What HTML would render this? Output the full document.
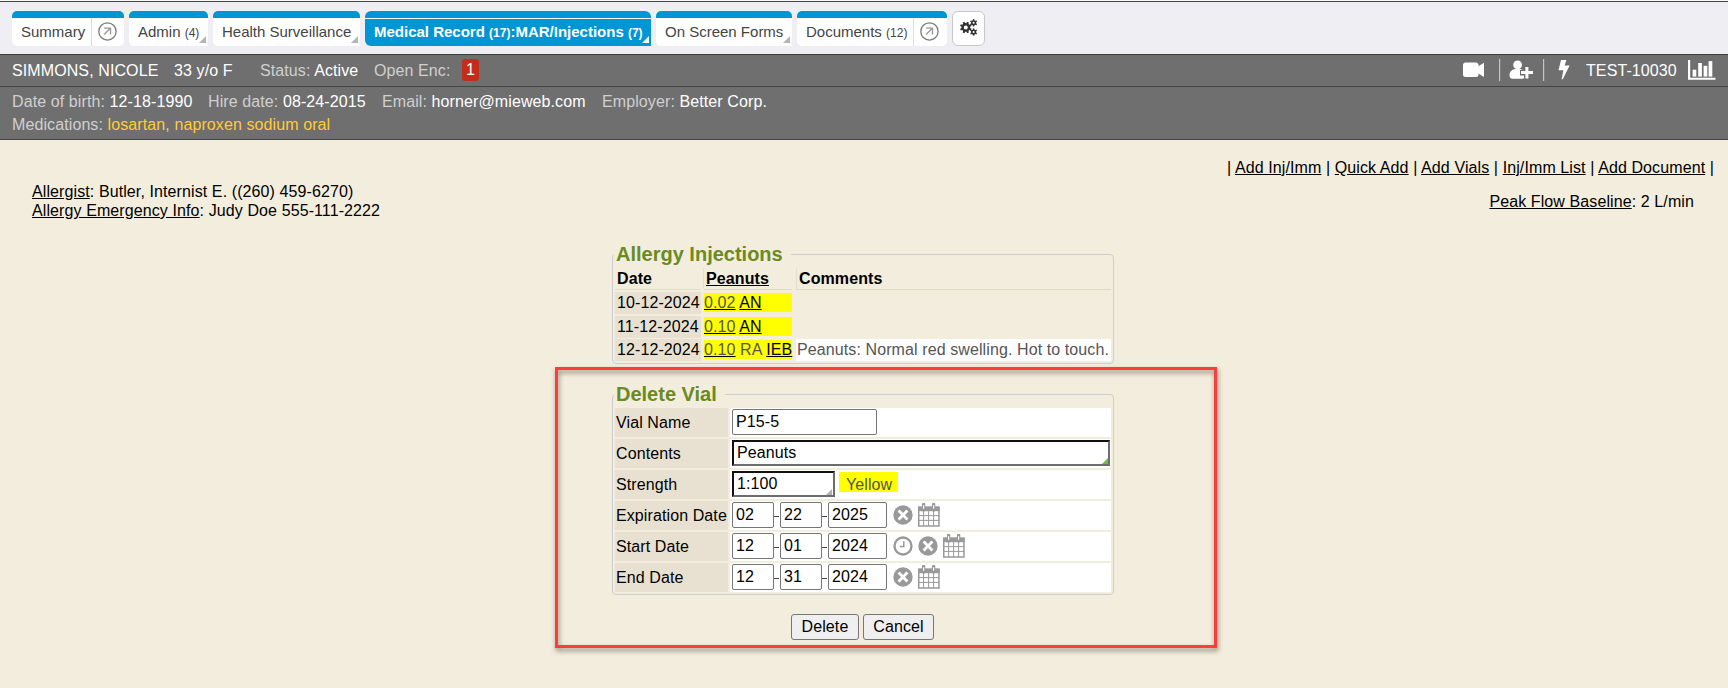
<!DOCTYPE html>
<html><head><meta charset="utf-8">
<style>
*{box-sizing:border-box}
html,body{margin:0;padding:0}
body{width:1728px;height:688px;overflow:hidden;background:#f3eddd;font-family:"Liberation Sans",sans-serif;color:#000;position:relative;letter-spacing:0.1px}
.legend,.tab{letter-spacing:0}
.abs{position:absolute}
#topbar{left:0;top:0;width:1728px;height:54px;background:#efeef3;border-top:1px solid #f8f8fb}
#topline{left:0;top:1px;width:1728px;height:1px;background:#454545}
.tab{position:absolute;top:11px;height:35px;background:#fff;border-top:7px solid #0096d6;border-radius:5px;font-size:15px;color:#444;white-space:nowrap}
.tab .t{position:absolute;top:5px;line-height:17px}
.tab small{font-size:12px}
.grip{position:absolute;right:2px;bottom:3px;width:0;height:0;border-left:7px solid transparent;border-bottom:7px solid #b5b5b5}
.sep{position:absolute;top:0;bottom:0;width:1px;background:#ddd}
.ext{position:absolute;width:19px;height:19px;border:1.3px solid #777;border-radius:50%}
#hdr1{left:0;top:54px;width:1728px;height:33px;background:#6f6f6f;border-top:1px solid #3c3c3c;border-bottom:1px solid #444;font-size:16px;color:#fff;white-space:nowrap}
#hdr2{left:0;top:87px;width:1728px;height:53px;background:#6f6f6f;border-bottom:1px solid #444;font-size:16px;color:#fff;white-space:nowrap}
.lbl{color:#d0d0d0}
.yel{color:#ffcc33}
.u{text-decoration:underline}
.txt16{font-size:16px;white-space:nowrap}
fieldset.fs{position:absolute;border:1px solid #cacdd1;border-radius:4px;margin:0;padding:0}
.legend{position:absolute;font-size:20px;font-weight:bold;color:#6a8a22;background:#f3eddd;white-space:nowrap;line-height:22px}
.cell{position:absolute;font-size:16px;white-space:nowrap;line-height:18px}
.dk{background:#e8e1d2}
.wh{background:#fff}
.yl{background:#ffff00}
.gr{color:#555}
.u.gr{text-decoration-color:#000}
.inp{position:absolute;background:#fff;border:1px solid #767676;border-radius:2px;font-size:16px;line-height:18px;padding:3px 0 0 3px;white-space:nowrap}
.inset{border-width:2px;border-style:solid;border-color:#111 #6d6d6d #6d6d6d #111;border-radius:0}
.btn{position:absolute;top:614px;height:26px;background:#efefef;border:1px solid #767676;border-radius:3px;font-size:16px;line-height:18px;text-align:center;padding-top:3px}
</style></head><body>

<div id="topbar" class="abs"></div><div id="topline" class="abs"></div>

<!-- tabs -->
<div class="tab" style="left:12px;width:112px"><span class="t" style="left:9px">Summary</span><div class="sep" style="left:79px"></div><svg class="abs" style="left:84px;top:2px" width="22" height="22" viewBox="0 0 22 22"><circle cx="11.45" cy="11.45" r="8.65" fill="none" stroke="#7a7a7a" stroke-width="1.3"/><path d="M8 8.1H14.5V14.6M14.5 8.1L8.1 14.6" fill="none" stroke="#9a9a9a" stroke-width="1.4"/></svg></div>
<div class="tab" style="left:129px;width:79px;border-bottom-right-radius:0"><span class="t" style="left:9px">Admin <small>(4)</small></span><div class="grip"></div></div>
<div class="tab" style="left:213px;width:147px;border-bottom-right-radius:0"><span class="t" style="left:9px">Health Surveillance</span><div class="grip"></div></div>
<div class="tab" style="left:365px;width:286px;background:#0096d6;color:#fff;font-weight:bold;border-radius:6px 6px 0 6px"><div style="position:absolute;left:0;right:0;top:0;height:1px;background:#fff"></div><span class="t" style="left:9px">Medical Record <small>(17)</small>:MAR/Injections <small>(7)</small></span><div class="grip" style="border-bottom-color:#fff"></div></div>
<div class="tab" style="left:656px;width:136px;border-bottom-right-radius:0"><span class="t" style="left:9px">On Screen Forms</span><div class="grip"></div></div>
<div class="tab" style="left:797px;width:150px"><span class="t" style="left:9px">Documents <small>(12)</small></span><div class="sep" style="left:116px"></div><svg class="abs" style="left:121px;top:2px" width="22" height="22" viewBox="0 0 22 22"><circle cx="11.45" cy="11.45" r="8.65" fill="none" stroke="#7a7a7a" stroke-width="1.3"/><path d="M8 8.1H14.5V14.6M14.5 8.1L8.1 14.6" fill="none" stroke="#9a9a9a" stroke-width="1.4"/></svg></div>
<div class="abs" style="left:952px;top:11px;width:33px;height:35px;background:#fff;border:1px solid #c8c8c8;border-radius:6px"></div>
<svg class="abs" style="left:952px;top:11px" width="33" height="35" viewBox="952 11 33 35"><circle cx="965.8" cy="27.4" r="3.20" fill="none" stroke="#333" stroke-width="2.40"/><rect x="964.80" y="21.60" width="2.0" height="2.20" fill="#333" transform="rotate(22.5 965.8 27.4)"/><rect x="964.80" y="21.60" width="2.0" height="2.20" fill="#333" transform="rotate(67.5 965.8 27.4)"/><rect x="964.80" y="21.60" width="2.0" height="2.20" fill="#333" transform="rotate(112.5 965.8 27.4)"/><rect x="964.80" y="21.60" width="2.0" height="2.20" fill="#333" transform="rotate(157.5 965.8 27.4)"/><rect x="964.80" y="21.60" width="2.0" height="2.20" fill="#333" transform="rotate(202.5 965.8 27.4)"/><rect x="964.80" y="21.60" width="2.0" height="2.20" fill="#333" transform="rotate(247.5 965.8 27.4)"/><rect x="964.80" y="21.60" width="2.0" height="2.20" fill="#333" transform="rotate(292.5 965.8 27.4)"/><rect x="964.80" y="21.60" width="2.0" height="2.20" fill="#333" transform="rotate(337.5 965.8 27.4)"/><circle cx="973.6" cy="22.8" r="1.80" fill="none" stroke="#333" stroke-width="1.60"/><rect x="972.85" y="19.20" width="1.5" height="1.80" fill="#333" transform="rotate(0.0 973.6 22.8)"/><rect x="972.85" y="19.20" width="1.5" height="1.80" fill="#333" transform="rotate(60.0 973.6 22.8)"/><rect x="972.85" y="19.20" width="1.5" height="1.80" fill="#333" transform="rotate(120.0 973.6 22.8)"/><rect x="972.85" y="19.20" width="1.5" height="1.80" fill="#333" transform="rotate(180.0 973.6 22.8)"/><rect x="972.85" y="19.20" width="1.5" height="1.80" fill="#333" transform="rotate(240.0 973.6 22.8)"/><rect x="972.85" y="19.20" width="1.5" height="1.80" fill="#333" transform="rotate(300.0 973.6 22.8)"/><circle cx="973.6" cy="32.0" r="1.80" fill="none" stroke="#333" stroke-width="1.60"/><rect x="972.85" y="28.40" width="1.5" height="1.80" fill="#333" transform="rotate(0.0 973.6 32.0)"/><rect x="972.85" y="28.40" width="1.5" height="1.80" fill="#333" transform="rotate(60.0 973.6 32.0)"/><rect x="972.85" y="28.40" width="1.5" height="1.80" fill="#333" transform="rotate(120.0 973.6 32.0)"/><rect x="972.85" y="28.40" width="1.5" height="1.80" fill="#333" transform="rotate(180.0 973.6 32.0)"/><rect x="972.85" y="28.40" width="1.5" height="1.80" fill="#333" transform="rotate(240.0 973.6 32.0)"/><rect x="972.85" y="28.40" width="1.5" height="1.80" fill="#333" transform="rotate(300.0 973.6 32.0)"/></svg>

<!-- header -->
<div id="hdr1" class="abs">
  <span class="abs" style="left:12px;top:7px">SIMMONS, NICOLE</span>
  <span class="abs" style="left:174px;top:7px">33 y/o F</span>
  <span class="abs" style="left:260px;top:7px"><span class="lbl">Status:</span> Active</span>
  <span class="abs" style="left:374px;top:7px"><span class="lbl">Open Enc:</span></span>
  <span class="abs" style="left:462px;top:4px;width:17px;height:22px;background:#c42d1c;border-radius:3px;text-align:center;line-height:22px">1</span>
  <span class="abs" style="left:1586px;top:7px">TEST-10030</span>
</div>
<svg class="abs" style="left:1455px;top:54px" width="273" height="33" viewBox="1455 54 273 33">
<rect x="1463" y="62.5" width="15.5" height="14.5" rx="2.5" fill="#fff"/>
<path d="M1477.5 66.8L1484 62.7V77L1477.5 73z" fill="#fff"/>
<rect x="1499" y="59" width="1.2" height="22" fill="#c4c4c4"/>
<circle cx="1517.6" cy="64.8" r="4.4" fill="#fff"/>
<path d="M1509.6 76v-1.2c0-3.3 2.8-5.8 6.2-5.8h3.4c3.4 0 6.2 2.5 6.2 5.8v1.2c0 1.6-1.2 2.8-2.8 2.8h-10.2c-1.6 0-2.8-1.2-2.8-2.8z" fill="#fff"/>
<path d="M1524 66h5.8v4h4v5.6h-4v4h-5.8v-4h-4v-5.6h4z" fill="#6f6f6f"/>
<path d="M1525.4 67h3v3.9h4.6v3h-4.6v4.5h-3v-4.5h-4.4v-3h4.4z" fill="#fff"/>
<rect x="1543" y="59" width="1.2" height="22" fill="#c4c4c4"/>
<path d="M1561 59.9H1566.4L1564.6 65.4H1569.6L1562.8 79.2H1561.6L1563.4 70.2H1558.5z" fill="#fff"/>
<path d="M1688 60h2.2v17.8h25.2v2h-27.4z" fill="#fff"/>
<rect x="1692.6" y="69.7" width="3.7" height="6.9" fill="#fff"/>
<rect x="1698.2" y="63" width="3.7" height="13.6" fill="#fff"/>
<rect x="1703.6" y="65.8" width="3.7" height="10.8" fill="#fff"/>
<rect x="1708.6" y="61.1" width="3.7" height="15.5" fill="#fff"/>
</svg>
<div id="hdr2" class="abs">
  <span class="abs" style="left:12px;top:6px"><span class="lbl">Date of birth:</span> 12-18-1990</span>
  <span class="abs" style="left:208px;top:6px"><span class="lbl">Hire date:</span> 08-24-2015</span>
  <span class="abs" style="left:382px;top:6px"><span class="lbl">Email:</span> horner@mieweb.com</span>
  <span class="abs" style="left:602px;top:6px"><span class="lbl">Employer:</span> Better Corp.</span>
  <span class="abs" style="left:12px;top:29px"><span class="lbl">Medications:</span> <span class="yel">losartan</span><span class="lbl">,</span> <span class="yel">naproxen sodium oral</span></span>
</div>

<!-- links -->
<div class="abs txt16" style="right:14px;top:159px">| <span class="u">Add Inj/Imm</span> | <span class="u">Quick Add</span> | <span class="u">Add Vials</span> | <span class="u">Inj/Imm List</span> | <span class="u">Add Document</span> |</div>
<div class="abs txt16" style="right:34px;top:193px"><span class="u">Peak Flow Baseline</span>: 2 L/min</div>
<div class="abs txt16" style="left:32px;top:183px"><span class="u">Allergist</span>: Butler, Internist E. ((260) 459-6270)</div>
<div class="abs txt16" style="left:32px;top:202px"><span class="u">Allergy Emergency Info</span>: Judy Doe 555-111-2222</div>

<!-- Allergy injections -->
<div class="abs" style="left:612px;top:254px;width:502px;height:110px;border:1px solid #cacdd1;border-radius:4px"></div>
<div class="legend" style="left:614px;top:243px;padding:0 8px 0 2px">Allergy Injections</div>

<div class="cell" style="left:615px;top:268px;width:86px;height:22px;border-bottom:1px solid #dcdcc4;font-weight:bold;padding:2px 0 0 2px">Date</div>
<div class="abs" style="left:703px;top:268px;width:1px;height:21px;background:#e0e0cc"></div>
<div class="cell" style="left:704px;top:268px;width:88px;height:22px;border-bottom:1px solid #dcdcc4;font-weight:bold;padding:2px 0 0 2px"><span class="u">Peanuts</span></div>
<div class="abs" style="left:796px;top:268px;width:1px;height:21px;background:#e0e0cc"></div>
<div class="cell" style="left:796px;top:268px;width:315px;height:22px;border-bottom:1px solid #dcdcc4;font-weight:bold;padding:2px 0 0 3px">Comments</div>

<div class="cell dk" style="left:615px;top:292px;width:86px;height:22px;padding:2px 0 0 2px">10-12-2024</div>
<div class="cell yl" style="left:704px;top:293px;width:88px;height:19px;padding:1px 0 0 0"><span class="u gr">0.02</span> <span class="u">AN</span></div>
<div class="cell dk" style="left:615px;top:316px;width:86px;height:22px;padding:2px 0 0 2px">11-12-2024</div>
<div class="cell yl" style="left:704px;top:317px;width:88px;height:19px;padding:1px 0 0 0"><span class="u gr">0.10</span> <span class="u">AN</span></div>
<div class="cell dk" style="left:615px;top:339px;width:86px;height:22px;padding:2px 0 0 2px">12-12-2024</div>
<div class="cell yl" style="left:704px;top:340px;width:88px;height:19px;padding:1px 0 0 0"><span class="u gr">0.10</span> <span class="gr">RA</span> <span class="u">IEB</span></div>
<div class="cell wh gr" style="left:796px;top:339px;width:315px;height:22px;padding:2px 0 0 1px;color:#555">Peanuts: Normal red swelling. Hot to touch.</div>

<!-- red annotation -->
<div class="abs" style="left:555px;top:367px;width:662px;height:281px;border:3px solid #fd3d3d;filter:drop-shadow(1px 3px 2.5px rgba(50,45,30,0.55))"></div>

<!-- Delete vial -->
<div class="abs" style="left:612px;top:394px;width:502px;height:201px;border:1px solid #cacdd1;border-radius:4px"></div>
<div class="legend" style="left:614px;top:383px;padding:0 8px 0 2px">Delete Vial</div>

<div class="cell dk" style="left:615px;top:408px;width:113px;height:29px;padding:6px 0 0 1px">Vial Name</div>
<div class="cell wh" style="left:730px;top:408px;width:381px;height:29px"></div>
<div class="cell dk" style="left:615px;top:439px;width:113px;height:29px;padding:6px 0 0 1px">Contents</div>
<div class="cell wh" style="left:730px;top:439px;width:381px;height:29px"></div>
<div class="cell dk" style="left:615px;top:470px;width:113px;height:29px;padding:6px 0 0 1px">Strength</div>
<div class="cell wh" style="left:730px;top:470px;width:381px;height:29px"></div>
<div class="cell dk" style="left:615px;top:501px;width:113px;height:29px;padding:6px 0 0 1px">Expiration Date</div>
<div class="cell wh" style="left:730px;top:501px;width:381px;height:29px"></div>
<div class="cell dk" style="left:615px;top:532px;width:113px;height:29px;padding:6px 0 0 1px">Start Date</div>
<div class="cell wh" style="left:730px;top:532px;width:381px;height:29px"></div>
<div class="cell dk" style="left:615px;top:563px;width:113px;height:29px;padding:6px 0 0 1px">End Date</div>
<div class="cell wh" style="left:730px;top:563px;width:381px;height:29px"></div>

<div class="inp" style="left:732px;top:409px;width:145px;height:26px">P15-5</div>
<div class="inp inset" style="left:732px;top:440px;width:378px;height:26px;padding:2px 0 0 3px">Peanuts<div class="abs" style="right:0;bottom:0;width:0;height:0;border-left:6px solid transparent;border-bottom:6px solid #6cbf3a"></div></div>
<div class="inp inset" style="left:732px;top:471px;width:103px;height:26px;padding:2px 0 0 3px">1:100<div class="abs" style="right:1px;bottom:0;width:0;height:0;border-left:6px solid transparent;border-bottom:6px solid #b0b0b0"></div></div>
<div class="cell yl gr" style="left:839px;top:472px;width:59px;height:20px;padding:4px 0 0 7px">Yellow</div>

<div class="inp" style="left:732px;top:502px;width:42px;height:26px">02</div>
<div class="inp" style="left:780px;top:502px;width:42px;height:26px">22</div>
<div class="inp" style="left:828px;top:502px;width:59px;height:26px">2025</div>
<div class="inp" style="left:732px;top:533px;width:42px;height:26px">12</div>
<div class="inp" style="left:780px;top:533px;width:42px;height:26px">01</div>
<div class="inp" style="left:828px;top:533px;width:59px;height:26px">2024</div>
<div class="inp" style="left:732px;top:564px;width:42px;height:26px">12</div>
<div class="inp" style="left:780px;top:564px;width:42px;height:26px">31</div>
<div class="inp" style="left:828px;top:564px;width:59px;height:26px">2024</div>

<svg class="abs" style="left:892px;top:504px" width="22" height="22" viewBox="0 0 22 22"><circle cx="11" cy="11" r="9.7" fill="#999"/><path d="M6.6 6.6L15.4 15.4M15.4 6.6L6.6 15.4" stroke="#fff" stroke-width="2.8"/></svg><svg class="abs" style="left:918px;top:503px" width="22" height="24" viewBox="0 0 22 24"><rect x="0.75" y="4.3" width="20.2" height="18.7" fill="#fff" stroke="#999" stroke-width="1.5"/><rect x="0" y="3.6" width="21.7" height="4.6" fill="#999"/><path d="M5.6 1.5v5.5M15.6 1.5v5.5" stroke="#999" stroke-width="3.4" stroke-linecap="round"/><path d="M5.6 2.2v3.6M15.6 2.2v3.6" stroke="#fff" stroke-width="1.2"/><path d="M5.6 8v15M10.6 8v15M15.6 8v15M1 12.6h20M1 17.4h20" stroke="#999" stroke-width="1"/></svg><svg class="abs" style="left:892px;top:535px" width="22" height="22" viewBox="0 0 22 22"><circle cx="11" cy="11" r="8.5" fill="none" stroke="#999" stroke-width="2.4"/><path d="M11.8 6.2V11.6H7.8" fill="none" stroke="#999" stroke-width="1.5"/></svg><svg class="abs" style="left:917px;top:535px" width="22" height="22" viewBox="0 0 22 22"><circle cx="11" cy="11" r="9.7" fill="#999"/><path d="M6.6 6.6L15.4 15.4M15.4 6.6L6.6 15.4" stroke="#fff" stroke-width="2.8"/></svg><svg class="abs" style="left:943px;top:534px" width="22" height="24" viewBox="0 0 22 24"><rect x="0.75" y="4.3" width="20.2" height="18.7" fill="#fff" stroke="#999" stroke-width="1.5"/><rect x="0" y="3.6" width="21.7" height="4.6" fill="#999"/><path d="M5.6 1.5v5.5M15.6 1.5v5.5" stroke="#999" stroke-width="3.4" stroke-linecap="round"/><path d="M5.6 2.2v3.6M15.6 2.2v3.6" stroke="#fff" stroke-width="1.2"/><path d="M5.6 8v15M10.6 8v15M15.6 8v15M1 12.6h20M1 17.4h20" stroke="#999" stroke-width="1"/></svg><svg class="abs" style="left:892px;top:566px" width="22" height="22" viewBox="0 0 22 22"><circle cx="11" cy="11" r="9.7" fill="#999"/><path d="M6.6 6.6L15.4 15.4M15.4 6.6L6.6 15.4" stroke="#fff" stroke-width="2.8"/></svg><svg class="abs" style="left:918px;top:565px" width="22" height="24" viewBox="0 0 22 24"><rect x="0.75" y="4.3" width="20.2" height="18.7" fill="#fff" stroke="#999" stroke-width="1.5"/><rect x="0" y="3.6" width="21.7" height="4.6" fill="#999"/><path d="M5.6 1.5v5.5M15.6 1.5v5.5" stroke="#999" stroke-width="3.4" stroke-linecap="round"/><path d="M5.6 2.2v3.6M15.6 2.2v3.6" stroke="#fff" stroke-width="1.2"/><path d="M5.6 8v15M10.6 8v15M15.6 8v15M1 12.6h20M1 17.4h20" stroke="#999" stroke-width="1"/></svg><div class="abs" style="left:774px;top:516px;width:5px;height:1px;background:#444"></div><div class="abs" style="left:822px;top:516px;width:5px;height:1px;background:#444"></div><div class="abs" style="left:774px;top:547px;width:5px;height:1px;background:#444"></div><div class="abs" style="left:822px;top:547px;width:5px;height:1px;background:#444"></div><div class="abs" style="left:774px;top:578px;width:5px;height:1px;background:#444"></div><div class="abs" style="left:822px;top:578px;width:5px;height:1px;background:#444"></div>
<div class="btn" style="left:791px;width:68px">Delete</div>
<div class="btn" style="left:863px;width:71px">Cancel</div>

</body></html>
